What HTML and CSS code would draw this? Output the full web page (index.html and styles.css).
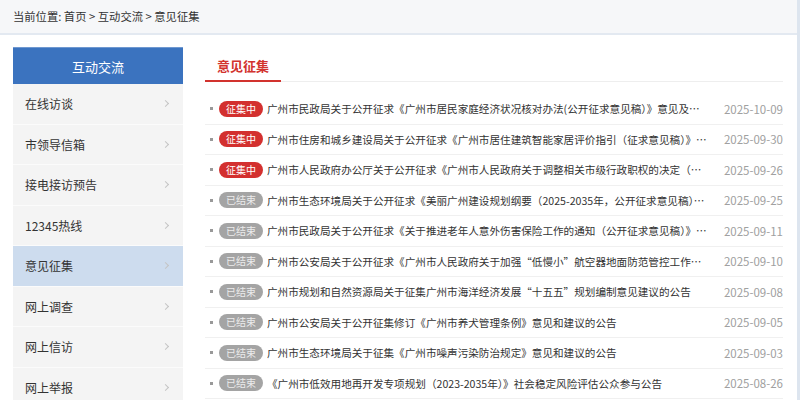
FILE: index.html
```html
<!DOCTYPE html>
<html lang="zh-CN">
<head>
    <meta charset="UTF-8">
    <meta name="viewport" content="width=device-width, initial-scale=1.0">
    <title>意见征集</title>
    <link rel="stylesheet" href="styles.css">
</head>
<body>
    <div class="page">
        <!-- 面包屑 -->
        <div class="crumb">当前位置: 首页 &gt; 互动交流 &gt; 意见征集</div>

        <div class="main">
            <!-- 左侧栏目 -->
            <aside class="side">
                <div class="side-title">互动交流</div>
                <ul class="side-list">
                    <li class="side-item"><span>在线访谈</span><i class="arrow"></i></li>
                    <li class="side-item"><span>市领导信箱</span><i class="arrow"></i></li>
                    <li class="side-item"><span>接电接访预告</span><i class="arrow"></i></li>
                    <li class="side-item"><span>12345热线</span><i class="arrow"></i></li>
                    <li class="side-item active"><span>意见征集</span><i class="arrow"></i></li>
                    <li class="side-item"><span>网上调查</span><i class="arrow"></i></li>
                    <li class="side-item"><span>网上信访</span><i class="arrow"></i></li>
                    <li class="side-item"><span>网上举报</span><i class="arrow"></i></li>
                </ul>
            </aside>

            <!-- 列表 -->
            <section class="content">
                <div class="tab-head">
                    <h2 class="tab-title">意见征集</h2>
                </div>
                <ul class="news">
                    <li class="news-item">
                        <span class="tag open">征集中</span>
                        <a href="#" class="news-title">广州市民政局关于公开征求《广州市居民家庭经济状况核对办法(公开征求意见稿）》意见及建议的公告</a>
                        <span class="news-date">2025-10-09</span>
                    </li>
                    <li class="news-item">
                        <span class="tag open">征集中</span>
                        <a href="#" class="news-title">广州市住房和城乡建设局关于公开征求《广州市居住建筑智能家居评价指引（征求意见稿）》意见的公告</a>
                        <span class="news-date">2025-09-30</span>
                    </li>
                    <li class="news-item">
                        <span class="tag open">征集中</span>
                        <a href="#" class="news-title">广州市人民政府办公厅关于公开征求《广州市人民政府关于调整相关市级行政职权的决定（征求意见稿）》意见的公告</a>
                        <span class="news-date">2025-09-26</span>
                    </li>
                    <li class="news-item">
                        <span class="tag">已结束</span>
                        <a href="#" class="news-title">广州市生态环境局关于公开征求《美丽广州建设规划纲要（2025-2035年，公开征求意见稿）》意见的公告</a>
                        <span class="news-date">2025-09-25</span>
                    </li>
                    <li class="news-item">
                        <span class="tag">已结束</span>
                        <a href="#" class="news-title">广州市民政局关于公开征求《关于推进老年人意外伤害保险工作的通知（公开征求意见稿）》意见的公告</a>
                        <span class="news-date">2025-09-11</span>
                    </li>
                    <li class="news-item">
                        <span class="tag">已结束</span>
                        <a href="#" class="news-title">广州市公安局关于公开征求《广州市人民政府关于加强“低慢小”航空器地面防范管控工作的通告》意见的公告</a>
                        <span class="news-date">2025-09-10</span>
                    </li>
                    <li class="news-item">
                        <span class="tag">已结束</span>
                        <a href="#" class="news-title">广州市规划和自然资源局关于征集广州市海洋经济发展“十五五”规划编制意见建议的公告</a>
                        <span class="news-date">2025-09-08</span>
                    </li>
                    <li class="news-item">
                        <span class="tag">已结束</span>
                        <a href="#" class="news-title">广州市公安局关于公开征集修订《广州市养犬管理条例》意见和建议的公告</a>
                        <span class="news-date">2025-09-05</span>
                    </li>
                    <li class="news-item">
                        <span class="tag">已结束</span>
                        <a href="#" class="news-title">广州市生态环境局关于征集《广州市噪声污染防治规定》意见和建议的公告</a>
                        <span class="news-date">2025-09-03</span>
                    </li>
                    <li class="news-item">
                        <span class="tag">已结束</span>
                        <a href="#" class="news-title">《广州市低效用地再开发专项规划（2023-2035年）》社会稳定风险评估公众参与公告</a>
                        <span class="news-date">2025-08-26</span>
                    </li>
                </ul>
            </section>
        </div>
    </div>
</body>
</html>
```

FILE: styles.css
```css
/* 重置 */
* {
    margin: 0;
    padding: 0;
    box-sizing: border-box;
}

body {
    font-family: "Noto Sans CJK SC", "Liberation Sans", sans-serif;
    color: #333;
    background: #fff;
    overflow: hidden;
}

ul {
    list-style: none;
}

a {
    color: inherit;
    text-decoration: none;
}

.page {
    min-height: 100vh;
    border-right: 3px solid #dde5ef;
}

/* 面包屑 */
.crumb {
    height: 35px;
    line-height: 33px;
    padding-left: 13px;
    font-size: 11.3px;
    color: #333;
    background: #f6f7f9;
    border-bottom: 2px solid #e3e9f1;
}

.main {
    display: flex;
    align-items: flex-start;
    padding: 12px 0 0 13px;
}

/* 左侧栏目 */
.side {
    width: 170px;
    flex-shrink: 0;
    background: #f4f4f4;
}

.side-title {
    height: 37px;
    line-height: 37px;
    text-align: center;
    font-size: 13px;
    color: #fff;
    background: #3b73bf;
    border-top: 1px solid #6f98d0;
}

.side-item {
    display: flex;
    align-items: center;
    justify-content: space-between;
    height: 40.5px;
    padding: 0 13px 0 12px;
    font-size: 12px;
    color: #333;
    border-bottom: 1px solid #fbfbfb;
}

.side-item.active {
    background: #cddcee;
}

.arrow {
    width: 5px;
    height: 5px;
    border-top: 1px solid #c4c4c4;
    border-right: 1px solid #c4c4c4;
    transform: rotate(45deg);
    margin-right: 2px;
}

/* 列表 */
.content {
    width: 578px;
    margin-left: 22px;
    padding-top: 5px;
}

.tab-head {
    display: flex;
    border-bottom: 1px solid #eee;
}

.tab-title {
    padding: 0 12px;
    line-height: 28px;
    font-size: 13px;
    font-weight: bold;
    color: #d2332e;
    border-bottom: 2px solid #d2332e;
    margin-bottom: -1px;
}

.news {
    padding-top: 12px;
}

.news-item {
    display: flex;
    align-items: center;
    height: 30.5px;
    padding-left: 5px;
    border-bottom: 1px solid #f0f0f0;
    font-size: 10.6px;
}

.news-item::before {
    content: "";
    width: 3px;
    height: 3px;
    background: #999;
    margin-right: 6px;
    flex-shrink: 0;
}

.tag {
    flex-shrink: 0;
    height: 16px;
    line-height: 16px;
    padding: 0 7px;
    border-radius: 8px;
    font-size: 10px;
    color: #ececec;
    background: #a4a4a4;
    margin-right: 4px;
}

.tag.open {
    color: #fff;
    background: #d3302f;
}

.news-title {
    flex: 1;
    min-width: 0;
    white-space: nowrap;
    overflow: hidden;
    text-overflow: ellipsis;
    color: #333;
    margin-right: 14px;
}

.news-date {
    flex-shrink: 0;
    font-size: 11.5px;
    color: #a0a0a0;
}
```
